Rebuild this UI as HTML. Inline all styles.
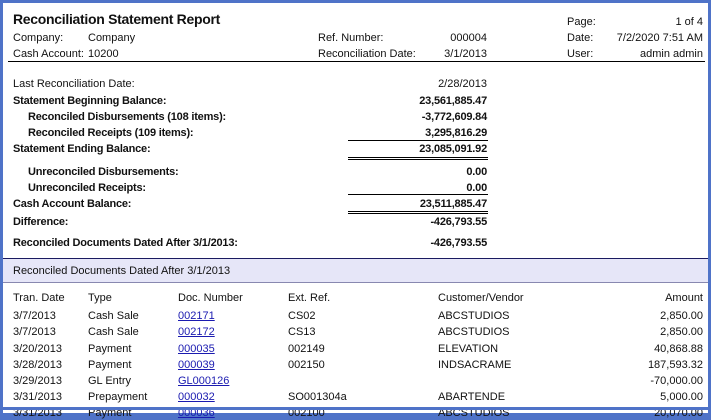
<!DOCTYPE html>
<html><head><meta charset="utf-8"><style>
*{margin:0;padding:0;box-sizing:border-box}
body{width:711px;height:410px;overflow:hidden;background:#4f73c8;font-family:"Liberation Sans",Arial,sans-serif;font-size:11px;color:#111}
#pg{position:absolute;left:3px;top:3px;width:705px;height:410px;background:#fff}
.t{position:absolute;white-space:nowrap;line-height:14px}
.r{text-align:right}
.b{font-weight:bold;letter-spacing:-0.2px}
.ln{position:absolute;height:1px;background:#000}
a{color:#1a1ab0;text-decoration:underline}
</style></head><body><div id="pg">
<div class="t b" style="left:10px;top:7px;font-size:14px;line-height:18px;letter-spacing:-0.3px">Reconciliation Statement Report</div>
<div class="t" style="left:10px;top:28px">Company:</div><div class="t" style="left:85px;top:28px">Company</div>
<div class="t" style="left:10px;top:44px">Cash Account:</div><div class="t" style="left:85px;top:44px">10200</div>
<div class="t" style="left:315px;top:28px">Ref. Number:</div><div class="t r" style="right:221px;top:28px">000004</div>
<div class="t" style="left:315px;top:44px">Reconciliation Date:</div><div class="t r" style="right:221px;top:44px">3/1/2013</div>
<div class="t" style="left:564px;top:12px">Page:</div><div class="t r" style="right:5px;top:12px">1 of 4</div>
<div class="t" style="left:564px;top:28px">Date:</div><div class="t r" style="right:5px;top:28px">7/2/2020 7:51 AM</div>
<div class="t" style="left:564px;top:44px">User:</div><div class="t r" style="right:5px;top:44px">admin admin</div>
<div class="ln" style="left:5px;top:58px;width:697px"></div>

<div class="t" style="left:10px;top:74px">Last Reconciliation Date:</div><div class="t r" style="right:221px;top:74px">2/28/2013</div>
<div class="t b" style="left:10px;top:91px">Statement Beginning Balance:</div><div class="t r b" style="right:221px;top:91px">23,561,885.47</div>
<div class="t b" style="left:25px;top:107px">Reconciled Disbursements (108 items):</div><div class="t r b" style="right:221px;top:107px">-3,772,609.84</div>
<div class="t b" style="left:25px;top:123px">Reconciled Receipts (109 items):</div><div class="t r b" style="right:221px;top:123px">3,295,816.29</div>
<div class="ln" style="left:345px;top:137px;width:140px"></div>
<div class="t b" style="left:10px;top:139px">Statement Ending Balance:</div><div class="t r b" style="right:221px;top:139px">23,085,091.92</div>
<div class="ln" style="left:345px;top:154px;width:140px"></div><div class="ln" style="left:345px;top:156px;width:140px"></div>
<div class="t b" style="left:25px;top:162px">Unreconciled Disbursements:</div><div class="t r b" style="right:221px;top:162px">0.00</div>
<div class="t b" style="left:25px;top:178px">Unreconciled Receipts:</div><div class="t r b" style="right:221px;top:178px">0.00</div>
<div class="ln" style="left:345px;top:191px;width:140px"></div>
<div class="t b" style="left:10px;top:194px">Cash Account Balance:</div><div class="t r b" style="right:221px;top:194px">23,511,885.47</div>
<div class="ln" style="left:345px;top:208px;width:140px"></div><div class="ln" style="left:345px;top:210px;width:140px"></div>
<div class="t b" style="left:10px;top:212px">Difference:</div><div class="t r b" style="right:221px;top:212px">-426,793.55</div>
<div class="t b" style="left:10px;top:233px">Reconciled Documents Dated After 3/1/2013:</div><div class="t r b" style="right:221px;top:233px">-426,793.55</div>

<div style="position:absolute;left:0;top:255px;width:705px;height:25px;background:#e6e6f8;border-top:1px solid #1a1a60;border-bottom:1px solid #8888b0"></div>
<div class="t" style="left:10px;top:261px">Reconciled Documents Dated After 3/1/2013</div>

<div class="t" style="left:10px;top:288px">Tran. Date</div><div class="t" style="left:85px;top:288px">Type</div><div class="t" style="left:175px;top:288px">Doc. Number</div><div class="t" style="left:285px;top:288px">Ext. Ref.</div><div class="t" style="left:435px;top:288px">Customer/Vendor</div><div class="t r" style="right:5px;top:288px">Amount</div>

<div class="t" style="left:10px;top:306px">3/7/2013</div><div class="t" style="left:85px;top:306px">Cash Sale</div><div class="t" style="left:175px;top:306px"><a>002171</a></div><div class="t" style="left:285px;top:306px">CS02</div><div class="t" style="left:435px;top:306px">ABCSTUDIOS</div><div class="t r" style="right:5px;top:306px">2,850.00</div>
<div class="t" style="left:10px;top:322px">3/7/2013</div><div class="t" style="left:85px;top:322px">Cash Sale</div><div class="t" style="left:175px;top:322px"><a>002172</a></div><div class="t" style="left:285px;top:322px">CS13</div><div class="t" style="left:435px;top:322px">ABCSTUDIOS</div><div class="t r" style="right:5px;top:322px">2,850.00</div>
<div class="t" style="left:10px;top:339px">3/20/2013</div><div class="t" style="left:85px;top:339px">Payment</div><div class="t" style="left:175px;top:339px"><a>000035</a></div><div class="t" style="left:285px;top:339px">002149</div><div class="t" style="left:435px;top:339px">ELEVATION</div><div class="t r" style="right:5px;top:339px">40,868.88</div>
<div class="t" style="left:10px;top:355px">3/28/2013</div><div class="t" style="left:85px;top:355px">Payment</div><div class="t" style="left:175px;top:355px"><a>000039</a></div><div class="t" style="left:285px;top:355px">002150</div><div class="t" style="left:435px;top:355px">INDSACRAME</div><div class="t r" style="right:5px;top:355px">187,593.32</div>
<div class="t" style="left:10px;top:371px">3/29/2013</div><div class="t" style="left:85px;top:371px">GL Entry</div><div class="t" style="left:175px;top:371px"><a>GL000126</a></div><div class="t r" style="right:5px;top:371px">-70,000.00</div>
<div class="t" style="left:10px;top:387px">3/31/2013</div><div class="t" style="left:85px;top:387px">Prepayment</div><div class="t" style="left:175px;top:387px"><a>000032</a></div><div class="t" style="left:285px;top:387px">SO001304a</div><div class="t" style="left:435px;top:387px">ABARTENDE</div><div class="t r" style="right:5px;top:387px">5,000.00</div>
<div class="t" style="left:10px;top:403px">3/31/2013</div><div class="t" style="left:85px;top:403px">Payment</div><div class="t" style="left:175px;top:403px"><a>000036</a></div><div class="t" style="left:285px;top:403px">002100</div><div class="t" style="left:435px;top:403px">ABCSTUDIOS</div><div class="t r" style="right:5px;top:403px">20,070.00</div>
</div>
<div style="position:absolute;left:0;top:407px;width:711px;height:3px;background:#4f73c8"></div>
</body></html>
